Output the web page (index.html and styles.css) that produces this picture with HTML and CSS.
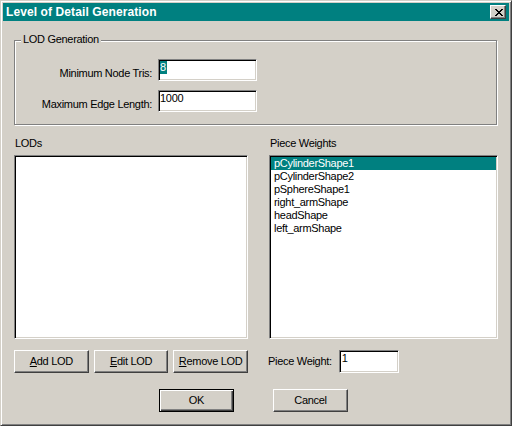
FILE: index.html
```html
<!DOCTYPE html>
<html>
<head>
<meta charset="utf-8">
<link rel="stylesheet" href="styles.css">
</head>
<body>
<div class="window">
  <div class="titlebar">
    <span class="title">Level of Detail Generation</span>
    <span class="close">
      <svg width="8" height="7" viewBox="0 0 8 7" shape-rendering="crispEdges"><path d="M0 0h2v1H0z M6 0h2v1H6z M1 1h2v1H1z M5 1h2v1H5z M2 2h4v1H2z M3 3h2v1H3z M2 4h4v1H2z M1 5h2v1H1z M5 5h2v1H5z M0 6h2v1H0z M6 6h2v1H6z" fill="#000"/></svg>
    </span>
  </div>
  <div class="content">
    <div class="group">
      <div class="group-title">LOD Generation</div>
      <div class="field-row first">
        <span class="field-label">Minimum Node Tris:</span>
        <div class="edit wide"><span class="sel">8</span></div>
      </div>
      <div class="field-row second">
        <span class="field-label">Maximum Edge Length:</span>
        <div class="edit wide">1000</div>
      </div>
    </div>
    <div class="panes">
      <div class="pane">
        <div class="caption">LODs</div>
        <div class="listbox"></div>
        <div class="btn-row">
          <button class="btn"><u>A</u>dd LOD</button>
          <button class="btn"><u>E</u>dit LOD</button>
          <button class="btn"><u>R</u>emove LOD</button>
        </div>
      </div>
      <div class="pane">
        <div class="caption">Piece Weights</div>
        <div class="listbox">
          <div class="item selected">pCylinderShape1</div>
          <div class="item">pCylinderShape2</div>
          <div class="item">pSphereShape1</div>
          <div class="item">right_armShape</div>
          <div class="item">headShape</div>
          <div class="item">left_armShape</div>
        </div>
        <div class="weight-row">
          <span class="weight-label">Piece Weight:</span>
          <div class="edit small">1</div>
        </div>
      </div>
    </div>
    <div class="dlg-buttons">
      <button class="btn default">OK</button>
      <button class="btn">Cancel</button>
    </div>
  </div>
</div>
</body>
</html>
```
FILE: styles.css
```css
* { box-sizing: border-box; }
html, body { margin: 0; padding: 0; }
body {
  width: 512px;
  height: 426px;
  overflow: hidden;
  background: #d4d0c8;
  font-family: "Liberation Sans", Arial, sans-serif;
  font-size: 11px;
  line-height: 13px;
  letter-spacing: -0.3px;
  color: #000;
}
.window {
  width: 512px;
  height: 426px;
  background: #d4d0c8;
  border: 1px solid;
  border-color: #d4d0c8 #404040 #404040 #d4d0c8;
  box-shadow: inset 1px 1px #fff, inset -1px -1px #808080;
  padding: 2px;
}
.titlebar {
  height: 18px;
  background: #008080;
  color: #fff;
  display: flex;
  align-items: center;
  justify-content: space-between;
  padding: 0 3px 0 3px;
}
.title {
  font-weight: bold;
  font-size: 12px;
  letter-spacing: 0.1px;
}
.close {
  width: 16px;
  height: 14px;
  background: #d4d0c8;
  border: 1px solid;
  border-color: #fff #404040 #404040 #fff;
  box-shadow: inset -1px -1px #808080;
  display: flex;
  align-items: center;
  justify-content: center;
  padding-left: 1px;
}
.close svg { display: block; }
.content {
  padding: 0 11px;
}
.group {
  margin-top: 19px;
  margin-right: 1px;
  border: 1px solid #808080;
  box-shadow: inset 1px 1px #fff, 1px 1px #fff;
  padding-bottom: 12px;
}
.group-title {
  width: fit-content;
  margin: -8px 0 0 6px;
  padding: 0 2px;
  background: #d4d0c8;
}
.field-row {
  display: flex;
  align-items: flex-start;
}
.field-row.first { margin-top: 13px; }
.field-row.second { margin-top: 9px; }
.field-label {
  width: 137px;
  text-align: right;
  padding-top: 8px;
  margin-right: 6px;
}
.edit {
  height: 22px;
  background: #fff;
  border: 1px solid;
  border-color: #808080 #fff #fff #808080;
  box-shadow: inset 1px 1px #000, inset -1px -1px #d4d0c8;
  padding: 1px 1px 0;
  line-height: 13px;
}
.edit.wide { width: 99px; }
.edit.small { width: 60px; height: 23px; padding-left: 2px; }
.sel {
  display: inline-block;
  background: #008080;
  color: #fff;
  padding: 0 1px 0 0;
}
.panes {
  display: grid;
  grid-template-columns: 234px 229px;
  column-gap: 21px;
  margin-top: 12px;
}
.caption {
  padding-left: 1px;
}
.listbox {
  margin-top: 5px;
  height: 184px;
  background: #fff;
  border: 1px solid;
  border-color: #808080 #fff #fff #808080;
  box-shadow: inset 1px 1px #000, inset -1px -1px #d4d0c8;
  padding: 1px;
}
.item {
  height: 13px;
  line-height: 13px;
  padding-left: 3px;
}
.item.selected {
  background: #008080;
  color: #fff;
}
.btn-row {
  display: flex;
  gap: 5px;
  margin-top: 11px;
}
.btn {
  width: 75px;
  height: 23px;
  padding: 0;
  margin: 0;
  background: #d4d0c8;
  border: 1px solid;
  border-color: #fff #404040 #404040 #fff;
  box-shadow: inset -1px -1px #808080;
  font: inherit;
  letter-spacing: inherit;
  color: #000;
}
.btn.default {
  border-color: #000;
  box-shadow: inset 1px 1px #fff, inset -1px -1px #404040, inset -2px -2px #808080;
}
.weight-row {
  display: flex;
  align-items: center;
  margin-top: 11px;
  margin-left: -1px;
}
.weight-label {
  margin-right: 7px;
}
.dlg-buttons {
  display: flex;
  gap: 39px;
  padding-left: 145px;
  margin-top: 16px;
}
```
